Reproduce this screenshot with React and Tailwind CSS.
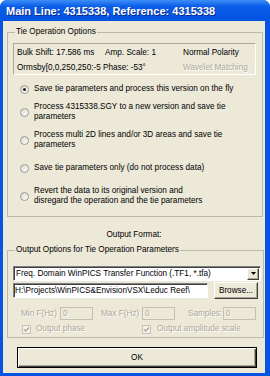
import React from 'react';

const options = [
  { lines: ['Save tie parameters and process this version on the fly'], checked: true, gap: 'mt-[9px]' },
  { lines: ['Process 4315338.SGY to a new version and save tie', 'parameters'], gap: 'mt-[8px]' },
  { lines: ['Process multi 2D lines and/or 3D areas and save tie', 'parameters'], gap: 'mt-[8px]' },
  { lines: ['Save tie parameters only (do not process data)'], gap: 'mt-[13px]' },
  { lines: ['Revert the data to its original version and', 'disregard the operation and the tie parameters'], gap: 'mt-[13px]' },
];

const disabledText = 'text-[#aca899] [text-shadow:1px_1px_0_#ffffff]';

const Radio = ({ checked }) => (
  <span className="flex h-[9px] w-[9px] shrink-0 items-center justify-center rounded-full border border-[#9a9a90] bg-linear-to-br from-[#d8d8cf] to-white">
    {checked && <span className="h-[3px] w-[3px] rounded-full bg-[#1e1e1e]" />}
  </span>
);

const Check = () => (
  <span className="flex h-[9px] w-[9px] shrink-0 items-center justify-center border border-[#c4c1b2] bg-[#f4f3ee]">
    <svg width="7" height="7" viewBox="0 0 7 7">
      <path d="M1 3.2 L2.8 5 L6 1.5" fill="none" stroke="#aca899" strokeWidth="1.4" />
    </svg>
  </span>
);

const RaisedButton = ({ children, className }) => (
  <div
    className={`flex items-center justify-center border border-t-white border-l-white border-b-[#404040] border-r-[#404040] bg-[#ece9d8] shadow-[inset_-1px_-1px_0_#aca899] ${className}`}
  >
    {children}
  </div>
);

const NumField = () => (
  <div className={`flex h-[13px] w-[33px] items-center border border-[#c4c1b2] bg-[#ece9d8] pl-[2px] ${disabledText}`}>0</div>
);

export default function App() {
  return (
    <div className="flex h-[376px] w-[270px] flex-col overflow-hidden rounded-t-[7px] bg-[#0754e2] font-['Liberation_Sans',Arial,sans-serif] text-[8.2px] leading-[10px] text-black">
      {/* title bar */}
      <div className="flex h-[21px] shrink-0 items-center bg-linear-to-b from-[#3d8ef6] via-[#0a5de9] via-30% to-[#0452e0] pl-[6px] pt-[1px] text-[11px] font-bold text-white [text-shadow:1px_1px_0_#0b2a8c]">
        Main Line: 4315338, Reference: 4315338
      </div>

      <div className="flex flex-1 flex-col pb-[3px] pl-[3px] pr-[5px]">
        <div className="flex flex-1 flex-col bg-[#ece9d8]">
          {/* Tie Operation Options */}
          <fieldset className="ml-[4px] mr-[2px] mt-[6px] border border-[#bdbaa9] pb-[10px] pl-[5px] pr-[6px] pt-[6px]">
            <legend className="ml-[2px] px-[1px] leading-[10px]">Tie Operation Options</legend>

            <div className="grid h-[32px] grid-cols-[88px_78px_1fr] gap-y-[4px] border border-t-[#aca899] border-l-[#aca899] border-b-white border-r-white pl-[3px] pt-[4px]">
              <span>Bulk Shift: 17.586 ms</span>
              <span>Amp. Scale: 1</span>
              <span>Normal Polarity</span>
              <span className="col-span-2">Ormsby[0,0,250,250:-5 Phase: -53°</span>
              <span className={disabledText}>Wavelet Matching</span>
            </div>

            {options.map((o, i) => (
              <div key={i} className={`flex items-center gap-[5px] pl-[7px] ${o.gap}`}>
                <Radio checked={o.checked} />
                <div className="whitespace-nowrap">
                  {o.lines.map((l, j) => (
                    <div key={j}>{l}</div>
                  ))}
                </div>
              </div>
            ))}
          </fieldset>

          <div className="mt-[13px] text-center">Output Format:</div>

          {/* Output Options */}
          <fieldset className="ml-[4px] mr-[2px] mt-[5px] border border-[#bdbaa9] pb-[3px] pl-[5px] pr-[2px] pt-[11px]">
            <legend className="ml-[2px] px-[1px] leading-[10px]">Output Options for Tie Operation Parameters</legend>

            <div className="flex h-[15px] items-center border border-t-[#808080] border-l-[#808080] border-b-white border-r-white bg-white shadow-[inset_1px_1px_0_#404040]">
              <span className="flex-1 whitespace-nowrap pl-[2px]">Freq. Domain WinPICS Transfer Function (.TF1, *.tfa)</span>
              <RaisedButton className="mr-px h-[12px] w-[12px]">
                <svg width="5" height="3" viewBox="0 0 5 3">
                  <path d="M0 0 H5 L2.5 3 Z" fill="#000" />
                </svg>
              </RaisedButton>
            </div>

            <div className="mt-[1px] flex h-[17px] items-center gap-[6px] pr-[3px]">
              <div className="flex h-[15px] w-[195px] items-center overflow-hidden whitespace-nowrap border border-t-[#808080] border-l-[#808080] border-b-white border-r-white bg-white pl-[1px] shadow-[inset_1px_1px_0_#404040]">
                {'H:\\Projects\\WinPICS&EnvisionVSX\\Leduc Reef\\'}
              </div>
              <RaisedButton className="h-[17px] w-[44px]">Browse...</RaisedButton>
            </div>

            <div className="mt-[8px] flex h-[13px] items-center pl-[8px]">
              <span className={`w-[39px] ${disabledText}`}>Min F(Hz)</span>
              <NumField />
              <span className={`ml-[8px] w-[41px] ${disabledText}`}>Max F(Hz)</span>
              <NumField />
              <span className={`ml-[13px] w-[35px] ${disabledText}`}>Samples:</span>
              <NumField />
            </div>

            <div className="mt-[4px] flex h-[10px] items-center pl-[9px]">
              <div className="flex w-[120px] items-center gap-[5px]">
                <Check />
                <span className={disabledText}>Output phase</span>
              </div>
              <div className="flex items-center gap-[6px]">
                <Check />
                <span className={disabledText}>Output amplitude scale</span>
              </div>
            </div>
          </fieldset>

          <div className="ml-[14px] mt-[9px] flex h-[21px] w-[240px] items-center justify-center border border-black bg-[#ece9d8] shadow-[inset_1px_1px_0_#ffffff,inset_-1px_-1px_0_#404040,inset_-2px_-2px_0_#aca899]">
            OK
          </div>
        </div>
      </div>
    </div>
  );
}
